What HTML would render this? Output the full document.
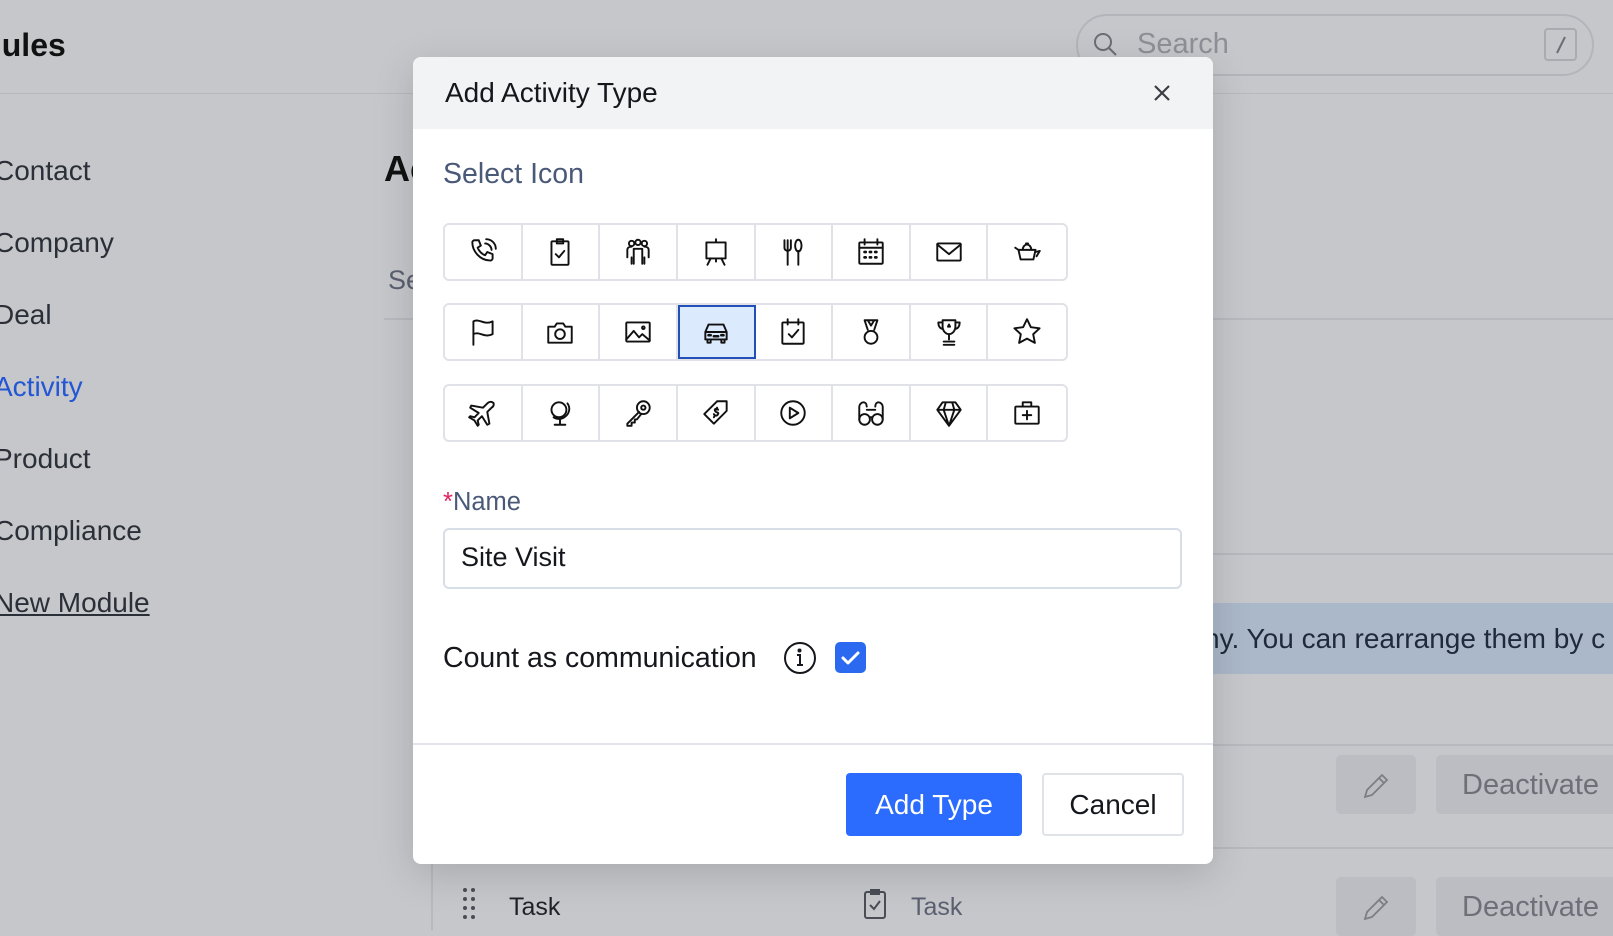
<!DOCTYPE html>
<html><head><meta charset="utf-8"><style>
*{box-sizing:border-box;margin:0;padding:0}
body{width:1613px;height:922px;overflow:hidden;background:#c6c7cb;font-family:"Liberation Sans",sans-serif;position:relative;color:#1b1d22}
.a{position:absolute;white-space:nowrap}
.side{font-size:28px;color:#2b2f38}
.gl{position:absolute;height:2px;background:#b7b9be}
.dlg{position:absolute;left:413px;top:57px;width:800px;height:807px;background:#fff;border-radius:8px;overflow:hidden;box-shadow:0 10px 40px rgba(0,0,0,.15)}
.hdr{height:72px;background:#f2f3f5;position:relative}
.row{position:absolute;left:30px;width:625px;height:58px;border:2px solid #e1e2e7;border-radius:6px;display:flex;overflow:visible}
.cell{width:78px;height:100%;border-right:2px solid #e1e2e7;display:flex;align-items:center;justify-content:center}
.cell:last-child{border-right:none}
.cell.sel{background:#dceafd;outline:2px solid #2350b8;outline-offset:-2px;position:relative;z-index:1}
svg.i{width:32px;height:32px;fill:none;stroke:#111;stroke-width:1.8;stroke-linecap:round;stroke-linejoin:round}
</style></head><body>
<div class="a" style="left:-64px;top:27px;font-size:32px;font-weight:bold;color:#111">Modules</div>
<div class="gl" style="left:0;top:93px;width:1613px;height:1px"></div>
<div style="position:absolute;left:1076px;top:14px;width:518px;height:62px;border:2px solid #b3b5ba;border-radius:31px"></div>
<svg class="a" style="left:1093px;top:32px" width="26" height="26" viewBox="0 0 26 26" fill="none" stroke="#6b6e75" stroke-width="2"><circle cx="10" cy="10" r="8"/><path d="M16 16l7 7"/></svg>
<div class="a" style="left:1137px;top:28px;font-size:29px;color:#8d9096">Search</div>
<div style="position:absolute;left:1544px;top:28px;width:33px;height:33px;border:2px solid #a9abb1;border-radius:4px"></div>
<svg class="a" style="left:1550px;top:34px" width="22" height="22"><path d="M15 3L7 19" stroke="#6b6e75" stroke-width="2"/></svg>
<div class="a side" style="left:-6px;top:155px">Contact</div>
<div class="a side" style="left:-6px;top:227px">Company</div>
<div class="a side" style="left:-6px;top:299px">Deal</div>
<div class="a side" style="left:-6px;top:371px;color:#2356d4">Activity</div>
<div class="a side" style="left:-6px;top:443px">Product</div>
<div class="a side" style="left:-6px;top:515px">Compliance</div>
<div class="a side" style="left:-6px;top:587px;text-decoration:underline">New Module</div>
<div class="a" style="left:384px;top:148px;font-size:36px;font-weight:bold;color:#111">Ac</div>
<div class="a" style="left:388px;top:265px;font-size:27px;color:#5b6070">Se</div>
<div class="gl" style="left:384px;top:318px;width:1229px"></div>
<div class="gl" style="left:1213px;top:553px;width:400px"></div>
<div style="position:absolute;left:1213px;top:603px;width:400px;height:71px;background:#abb8c9"></div>
<div class="a" style="left:1204px;top:623px;font-size:28px;color:#1f2a3a">ny. You can rearrange them by c</div>
<div class="gl" style="left:432px;top:744px;width:1181px"></div>
<div style="position:absolute;left:1336px;top:755px;width:80px;height:59px;background:#bcbdc2;border-radius:5px"></div>
<svg class="a" style="left:1361px;top:771px" width="30" height="30" fill="none" stroke="#7b7e85" stroke-width="1.8"><path d="M4 26l2-7 15-15 5 5-15 15z M18 7l5 5"/></svg>
<div style="position:absolute;left:1436px;top:755px;width:190px;height:59px;background:#bcbdc2;border-radius:5px"></div>
<div class="a" style="left:1462px;top:769px;font-size:29px;color:#6d7078">Deactivate</div>
<div class="gl" style="left:432px;top:847px;width:1181px"></div>
<div style="position:absolute;left:1336px;top:877px;width:80px;height:59px;background:#bcbdc2;border-radius:5px"></div>
<svg class="a" style="left:1361px;top:893px" width="30" height="30" fill="none" stroke="#7b7e85" stroke-width="1.8"><path d="M4 26l2-7 15-15 5 5-15 15z M18 7l5 5"/></svg>
<div style="position:absolute;left:1436px;top:877px;width:190px;height:59px;background:#bcbdc2;border-radius:5px"></div>
<div class="a" style="left:1462px;top:891px;font-size:29px;color:#6d7078">Deactivate</div>
<div style="position:absolute;left:431px;top:860px;width:2px;height:70px;background:#b7b9be"></div>
<svg class="a" style="left:460px;top:886px" width="20" height="36" fill="#4a4d55"><circle cx="5" cy="4" r="2"/><circle cx="13" cy="4" r="2"/><circle cx="5" cy="13" r="2"/><circle cx="13" cy="13" r="2"/><circle cx="5" cy="22" r="2"/><circle cx="13" cy="22" r="2"/><circle cx="5" cy="31" r="2"/><circle cx="13" cy="31" r="2"/></svg>
<div class="a" style="left:509px;top:893px;font-size:25px;color:#1f2228">Task</div>
<svg class="a" style="left:862px;top:888px" width="26" height="32" fill="none" stroke="#4a4d55" stroke-width="2"><rect x="3" y="4" width="20" height="26" rx="2"/><path d="M8 17l4 4 6-8M9 2h8v4H9z"/></svg>
<div class="a" style="left:911px;top:893px;font-size:25px;color:#5b6070">Task</div>

<div class="dlg">
 <div class="hdr">
  <div class="a" style="left:32px;top:20px;font-size:28px;color:#15171c">Add Activity Type</div>
  <svg class="a" style="left:739px;top:26px" width="20" height="20" stroke="#3a3d44" stroke-width="2.2"><path d="M3 3l14 14M17 3L3 17"/></svg>
 </div>
 <div class="a" style="left:30px;top:101px;font-size:28.5px;color:#4a5978">Select Icon</div>

 <div class="row" style="top:166px">
  <div class="cell"><svg class="i" viewBox="0 0 30 30"><path d="M7 4l4 0 2 5-3 2c1 3 4 6 7 7l2-3 5 2v4c0 1-1 2-2 2C12 23 5 14 5 6c0-1 1-2 2-2z"/><path d="M17 7c3 0 6 3 6 6M18 3c5 0 9 4 9 9"/></svg></div>
  <div class="cell"><svg class="i" viewBox="0 0 30 30"><rect x="7" y="5" width="16" height="22" rx="1"/><path d="M12 3h6v4h-6zM11 17l3 3 5-6"/></svg></div>
  <div class="cell"><svg class="i" viewBox="0 0 30 30"><circle cx="9" cy="7" r="2.5"/><circle cx="15" cy="6" r="2.5"/><circle cx="21" cy="7" r="2.5"/><path d="M5 20v-7c0-2 2-3 4-3M25 20v-7c0-2-2-3-4-3M11 26V12h8v14M9 26v-6M21 26v-6"/></svg></div>
  <div class="cell"><svg class="i" viewBox="0 0 30 30"><path d="M15 3v3M6 6h18v15H6zM10 21l-3 6M20 21l3 6M15 21v3"/></svg></div>
  <div class="cell"><svg class="i" viewBox="0 0 30 30"><path d="M7 4v7c0 2 2 3 3 3s3-1 3-3V4M10 4v23M20 14v13"/><ellipse cx="20" cy="9" rx="3" ry="5.5"/></svg></div>
  <div class="cell"><svg class="i" viewBox="0 0 30 30"><rect x="4" y="6" width="22" height="20" rx="1"/><path d="M9 3v5M21 3v5M4 11h22"/><path d="M9 15h1M14 15h1M19 15h1M9 20h1M14 20h1M19 20h1" stroke-width="2.6"/></svg></div>
  <div class="cell"><svg class="i" viewBox="0 0 30 30"><rect x="4" y="7" width="22" height="16" rx="1"/><path d="M4 8l11 9 11-9"/></svg></div>
  <div class="cell"><svg class="i" viewBox="0 0 30 30"><path d="M7 13h16l-2 9H9zM11 13c0-3 2-5 4-5s4 2 4 5M14 7h2M23 15l4-1-3 5M7 13l-3-2"/></svg></div>
 </div>
 <div class="row" style="top:246px">
  <div class="cell"><svg class="i" viewBox="0 0 30 30"><path d="M6 27V5c6-3 10 4 18 0v12c-8 4-12-3-18 0"/></svg></div>
  <div class="cell"><svg class="i" viewBox="0 0 30 30"><path d="M4 10h6l2-3h6l2 3h6v15H4z"/><circle cx="15" cy="17" r="4.5"/></svg></div>
  <div class="cell"><svg class="i" viewBox="0 0 30 30"><rect x="4" y="6" width="22" height="18" rx="1"/><path d="M4 22l7-8 5 6 3-3 7 6"/><circle cx="20" cy="11" r="1.2"/></svg></div>
  <div class="cell sel"><svg class="i" viewBox="0 0 30 30"><path d="M5 15l3-7h14l3 7v7H5zM5 15h20M7 22v3h3v-3M20 22v3h3v-3"/><path d="M8 18h2M20 18h2M13 19h4" stroke-width="2.4"/></svg></div>
  <div class="cell"><svg class="i" viewBox="0 0 30 30"><rect x="5" y="6" width="20" height="20" rx="1"/><path d="M10 3v5M20 3v5M11 17l3 3 6-7"/></svg></div>
  <div class="cell"><svg class="i" viewBox="0 0 30 30"><path d="M9 4l3 9M21 4l-3 9M9 4h12M12 4l3 5 3-5"/><circle cx="15" cy="20" r="6"/></svg></div>
  <div class="cell"><svg class="i" viewBox="0 0 30 30"><path d="M9 4h12v6c0 4-3 7-6 7s-6-3-6-7zM9 6H5c0 4 2 6 4 6M21 6h4c0 4-2 6-4 6M15 17v5M10 24h10M10 27h10"/><path d="M15 8l1 2h-2z" fill="#111"/></svg></div>
  <div class="cell"><svg class="i" viewBox="0 0 30 30"><path d="M15 3l3.6 7.5 8.2 1-6 5.6 1.6 8.1L15 21.2l-7.4 4 1.6-8.1-6-5.6 8.2-1z"/></svg></div>
 </div>
 <div class="row" style="top:327px">
  <div class="cell"><svg class="i" viewBox="0 0 30 30"><path d="M24 5c2 1 1 4-1 5l-4 4 2 11-2 1-5-8-4 4 1 4-1 1-3-5-5-3 1-1 4 1 4-4-8-5 1-2 11 2 4-4c1-1 3-2 5-1z"/></svg></div>
  <div class="cell"><svg class="i" viewBox="0 0 30 30"><circle cx="14" cy="12" r="7"/><path d="M22 6c3 4 2 10-3 13-3 2-7 2-10 0M15 21v4M10 26h10"/></svg></div>
  <div class="cell"><svg class="i" viewBox="0 0 30 30"><circle cx="20" cy="10" r="6"/><circle cx="20" cy="10" r="2"/><path d="M16 14L5 25v2h4v-3h3v-3h2l4-5"/></svg></div>
  <div class="cell"><svg class="i" viewBox="0 0 30 30"><path d="M16 4h9v9L13 25 4 16z"/><path d="M17 12c-1-2-4-1-3 1s4 1 3 3-3 2-4 0M16 10l-1 2M14 17l-1 2"/></svg></div>
  <div class="cell"><svg class="i" viewBox="0 0 30 30"><circle cx="15" cy="15" r="11"/><path d="M12 10v10l8-5z"/></svg></div>
  <div class="cell"><svg class="i" viewBox="0 0 30 30"><circle cx="9" cy="21" r="5"/><circle cx="21" cy="21" r="5"/><path d="M4 21V9c0-2 2-4 4-4s3 2 3 4M26 21V9c0-2-2-4-4-4s-3 2-3 4M11 12h8M14 19h2"/></svg></div>
  <div class="cell"><svg class="i" viewBox="0 0 30 30"><path d="M9 5h12l5 7-11 15L4 12zM4 12h22M12 5l-2 7 5 15 5-15-2-7"/></svg></div>
  <div class="cell"><svg class="i" viewBox="0 0 30 30"><rect x="4" y="9" width="22" height="16" rx="1"/><path d="M11 9V5h8v4M15 13v8M11 17h8"/></svg></div>
 </div>

 <div class="a" style="left:30px;top:431px;font-size:25.5px;color:#4a5978"><span style="color:#e0245e">*</span>Name</div>
 <div style="position:absolute;left:30px;top:471px;width:739px;height:61px;border:2px solid #d7dee8;border-radius:6px"></div>
 <div class="a" style="left:48px;top:485px;font-size:27px;color:#15171c">Site Visit</div>
 <div class="a" style="left:30px;top:585px;font-size:28.5px;color:#15171c">Count as communication</div>
 <svg class="a" style="left:370px;top:584px" width="34" height="34" fill="none" stroke="#15171c" stroke-width="2"><circle cx="17" cy="17" r="15"/><path d="M14 14h3v10M14 24h6"/><circle cx="16.5" cy="9.5" r="1" fill="#15171c"/></svg>
 <div style="position:absolute;left:422px;top:585px;width:31px;height:31px;background:#2b6af0;border-radius:5px"></div>
 <svg class="a" style="left:422px;top:585px" width="31" height="31" fill="none" stroke="#fff" stroke-width="3" stroke-linecap="round" stroke-linejoin="round"><path d="M8 16l5 5 10-10"/></svg>
 <div style="position:absolute;left:0;top:686px;width:800px;height:2px;background:#e3e5ea"></div>
 <div style="position:absolute;left:433px;top:716px;width:176px;height:63px;background:#2b6bfd;border-radius:4px;color:#fff;font-size:28px;text-align:center;line-height:63px">Add Type</div>
 <div style="position:absolute;left:629px;top:716px;width:142px;height:63px;border:2px solid #dfe2e7;border-radius:4px;color:#15171c;font-size:28px;text-align:center;line-height:59px">Cancel</div>
</div>
</body></html>
